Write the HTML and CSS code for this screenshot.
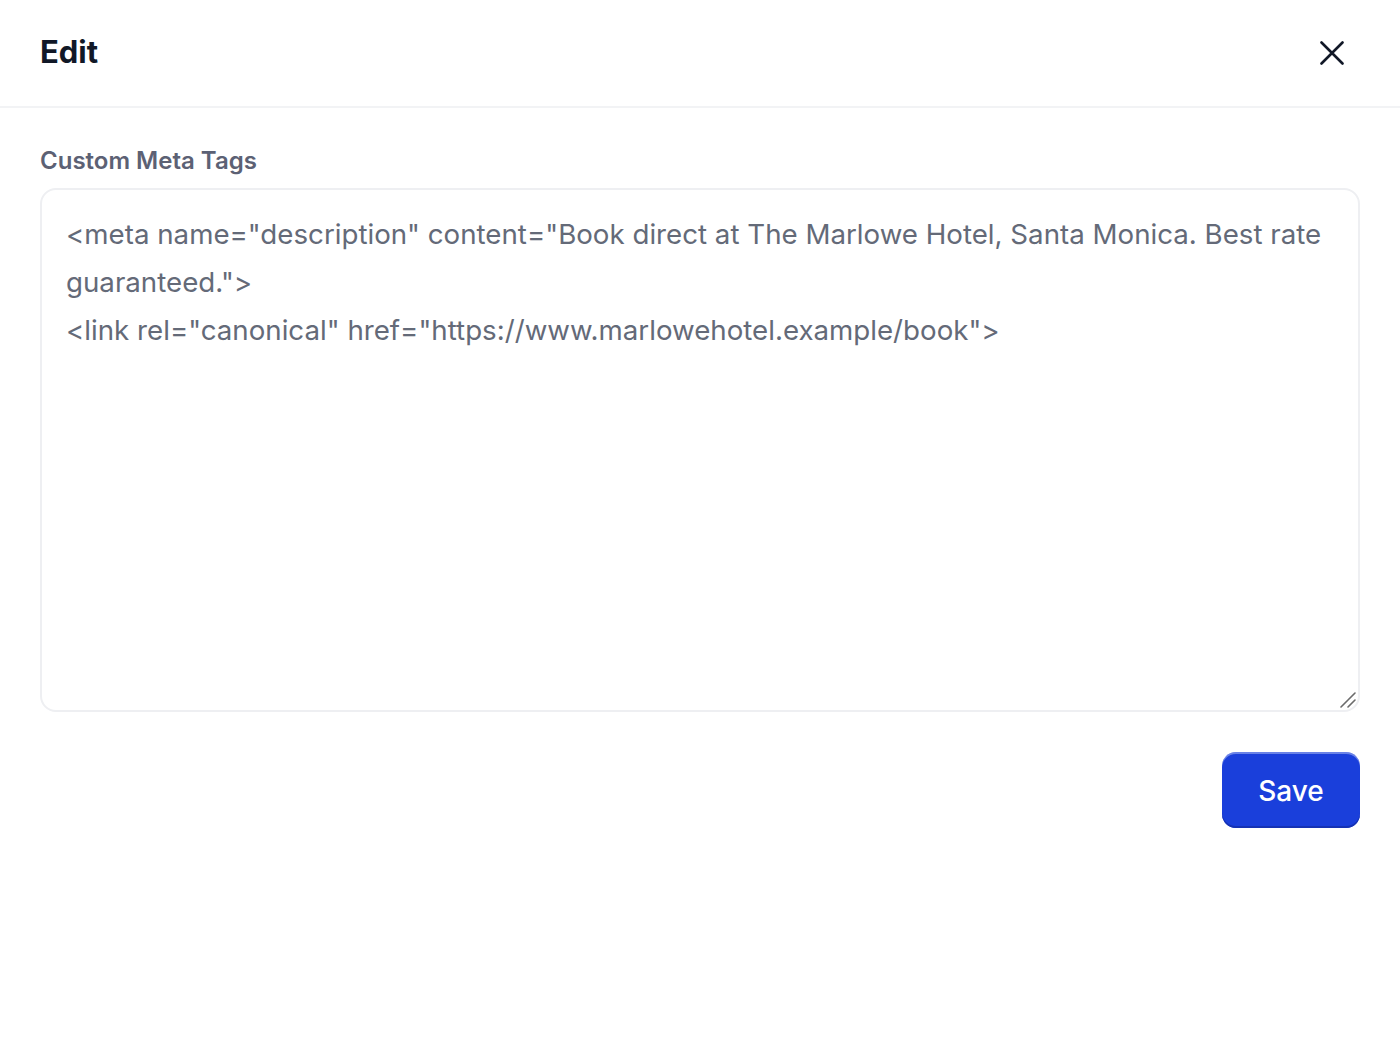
FILE: index.html
```html
<!DOCTYPE html>
<html lang="en">
<head>
<meta charset="utf-8">
<title>Edit</title>
<link rel="stylesheet" href="styles.css">
</head>
<body>
<div class="dialog">
  <header class="dialog-header">
    <h1 class="dialog-title">Edit</h1>
    <button class="close-btn" type="button" aria-label="Close">
      <svg width="24" height="24" viewBox="0 0 24 24" fill="none" stroke="currentColor" stroke-width="2.6" stroke-linecap="round">
        <path d="M1.5 1.5L22.5 22.5M22.5 1.5L1.5 22.5"/>
      </svg>
    </button>
  </header>
  <main class="dialog-body">
    <label class="field-label" for="meta">Custom Meta Tags</label>
    <div class="textarea-wrap">
      <textarea id="meta" class="field-textarea" spellcheck="false">&lt;meta name="description" content="Book direct at The Marlowe Hotel, Santa Monica. Best rate guaranteed."&gt;
&lt;link rel="canonical" href="https://www.marlowehotel.example/book"&gt;</textarea>
      <svg class="resize-grip" width="16" height="16" viewBox="0 0 16 16" fill="none" stroke="#6b6b6b" stroke-width="1.6" stroke-linecap="round">
        <path d="M1 15L15 1M8 15L15 8"/>
      </svg>
    </div>
    <div class="actions">
      <button class="save-btn" type="button">Save</button>
    </div>
  </main>
</div>
</body>
</html>
```

FILE: styles.css
```css
* { box-sizing: border-box; }
html, body {
  margin: 0;
  padding: 0;
  background: #ffffff;
  font-family: Inter, "Noto Sans", "Liberation Sans", sans-serif;
}
.dialog {
  width: 1400px;
}
.dialog-header {
  height: 108px;
  padding: 0 40px;
  display: flex;
  align-items: center;
  justify-content: space-between;
  border-bottom: 2px solid #f2f3f5;
}
.dialog-title {
  margin: 0;
  font-size: 31px;
  font-weight: 700;
  color: #111827;
  line-height: 1;
  padding-bottom: 4px;
}
.close-btn {
  background: none;
  border: 0;
  padding: 0;
  margin-right: 16px;
  color: #111827;
  display: flex;
  align-items: center;
  justify-content: center;
  width: 24px;
  height: 24px;
  cursor: pointer;
}
.dialog-body {
  padding: 38px 40px 40px;
  display: flex;
  flex-direction: column;
}
.field-label {
  font-size: 24px;
  font-weight: 600;
  color: #5c6174;
  line-height: 30px;
  margin-bottom: 12px;
}
.textarea-wrap {
  position: relative;
  width: 1320px;
  height: 524px;
}
.field-textarea {
  display: block;
  width: 100%;
  height: 100%;
  border: 2px solid #eeeff2;
  border-radius: 16px;
  padding: 20px 14px 20px 24px;
  font-family: inherit;
  font-size: 27.7px;
  line-height: 48px;
  color: #646a78;
  resize: none;
  outline: none;
  background: #fff;
}
.resize-grip {
  position: absolute;
  right: 4px;
  bottom: 4px;
  pointer-events: none;
}
.actions {
  display: flex;
  justify-content: flex-end;
  margin-top: 40px;
}
.save-btn {
  width: 138px;
  height: 76px;
  border: 0;
  border-radius: 14px;
  padding-top: 3px;
  background: #1a3fdb;
  color: #ffffff;
  font-family: inherit;
  font-size: 28px;
  font-weight: 500;
  box-shadow: inset 0 2px 0 rgba(255,255,255,0.35), inset 0 -2px 0 #1532b4;
  cursor: pointer;
}
```
